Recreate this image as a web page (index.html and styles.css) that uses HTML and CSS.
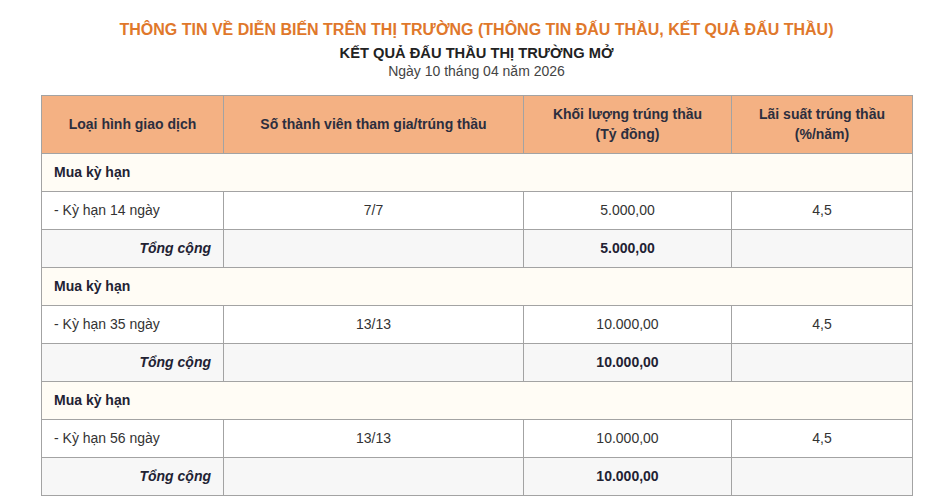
FILE: index.html
```html
<!DOCTYPE html>
<html lang="vi">
<head>
<meta charset="utf-8">
<link rel="stylesheet" href="styles.css">
</head>
<body>
<div class="page">
  <h1 class="title">THÔNG TIN VỀ DIỄN BIẾN TRÊN THỊ TRƯỜNG (THÔNG TIN ĐẤU THẦU, KẾT QUẢ ĐẤU THẦU)</h1>
  <h2 class="subtitle">KẾT QUẢ ĐẤU THẦU THỊ TRƯỜNG MỞ</h2>
  <p class="date">Ngày 10 tháng 04 năm 2026</p>
  <table class="results">
    <colgroup>
      <col class="c1"><col class="c2"><col class="c3"><col class="c4">
    </colgroup>
    <thead>
      <tr>
        <th>Loại hình giao dịch</th>
        <th>Số thành viên tham gia/trúng thầu</th>
        <th>Khối lượng trúng thầu<br>(Tỷ đồng)</th>
        <th>Lãi suất trúng thầu<br>(%/năm)</th>
      </tr>
    </thead>
    <tbody>
      <tr class="section"><td colspan="4">Mua kỳ hạn</td></tr>
      <tr class="item"><td>- Kỳ hạn 14 ngày</td><td>7/7</td><td>5.000,00</td><td>4,5</td></tr>
      <tr class="total"><td>Tổng cộng</td><td></td><td>5.000,00</td><td></td></tr>
      <tr class="section"><td colspan="4">Mua kỳ hạn</td></tr>
      <tr class="item"><td>- Kỳ hạn 35 ngày</td><td>13/13</td><td>10.000,00</td><td>4,5</td></tr>
      <tr class="total"><td>Tổng cộng</td><td></td><td>10.000,00</td><td></td></tr>
      <tr class="section"><td colspan="4">Mua kỳ hạn</td></tr>
      <tr class="item"><td>- Kỳ hạn 56 ngày</td><td>13/13</td><td>10.000,00</td><td>4,5</td></tr>
      <tr class="total"><td>Tổng cộng</td><td></td><td>10.000,00</td><td></td></tr>
    </tbody>
  </table>
</div>
</body>
</html>
```
FILE: styles.css
```css
html, body {
  margin: 0;
  padding: 0;
  background: #ffffff;
}
body {
  font-family: "Liberation Sans", Arial, sans-serif;
  color: #333333;
}
.page {
  width: 871px;
  margin-left: 41px;
  padding-top: 19px;
}
.title {
  margin: 0;
  text-align: center;
  font-weight: bold;
  font-size: 16px;
  line-height: 21px;
  color: #e0782b;
}
.subtitle {
  margin: 4px 0 0;
  text-align: center;
  font-weight: bold;
  font-size: 14.7px;
  line-height: 19px;
  color: #222222;
}
.date {
  margin: -1px 0 0;
  text-align: center;
  font-size: 14px;
  line-height: 19px;
  color: #444444;
}
.results {
  margin-top: 14px;
  width: 871px;
  border-collapse: collapse;
  table-layout: fixed;
  font-size: 14px;
}
.c1 { width: 182px; }
.c2 { width: 300px; }
.c3 { width: 208px; }
.c4 { width: 181px; }
.results th,
.results td {
  border: 1px solid #a3a3a3;
  padding: 8px 12px 9px;
  line-height: 20px;
  text-align: center;
  vertical-align: middle;
}
.results th {
  background: #f4b183;
  color: #2c2e3e;
  font-weight: bold;
  padding-top: 8px;
  padding-bottom: 9px;
}
.section td {
  background: #fffcf5;
  text-align: left;
  font-weight: bold;
  color: #222233;
}
.item td {
  background: #ffffff;
}
.item td:first-child {
  text-align: left;
}
.total td {
  background: #f7f7f7;
  font-weight: bold;
  color: #222233;
}
.total td:first-child {
  text-align: right;
  font-style: italic;
}
```
